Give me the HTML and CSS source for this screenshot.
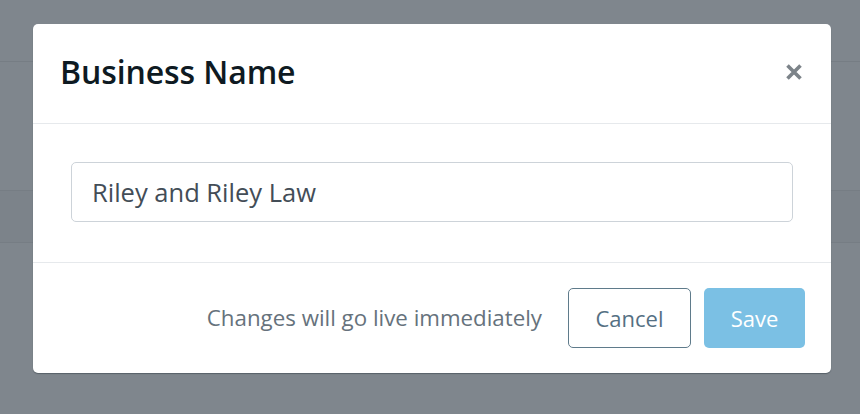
FILE: index.html
```html
<!DOCTYPE html>
<html>
<head>
<meta charset="utf-8">
<link rel="stylesheet" href="styles.css">
</head>
<body>
<div class="backdrop">
  <div class="bg-row bg-top"></div>
  <div class="bg-row bg-mid"></div>
  <div class="bg-row bg-band"></div>
  <div class="bg-row bg-rest"></div>
</div>
<div class="modal">
  <div class="modal-header">
    <h2 class="modal-title">Business Name</h2>
    <button class="close" aria-label="Close">
      <svg width="18" height="18" viewBox="0 0 18 18"><path d="M2.5 2.5 L15.5 15.5 M15.5 2.5 L2.5 15.5" stroke="#7c8389" stroke-width="3.6" stroke-linecap="butt"/></svg>
    </button>
  </div>
  <div class="modal-body">
    <div class="input">Riley and Riley Law</div>
  </div>
  <div class="modal-footer">
    <span class="hint">Changes will go live immediately</span>
    <button class="btn btn-cancel">Cancel</button>
    <button class="btn btn-save">Save</button>
  </div>
</div>
</body>
</html>
```

FILE: styles.css
```css
* { box-sizing: border-box; }
html, body { margin: 0; padding: 0; }
body {
  width: 860px;
  height: 414px;
  overflow: hidden;
  background: #7f868d;
  font-family: "Open Sans", "Noto Sans", sans-serif;
  position: relative;
}
.backdrop {
  display: flex;
  flex-direction: column;
  height: 414px;
}
.bg-row { border-bottom: 1px solid #767d84; }
.bg-top { height: 62px; }
.bg-mid { height: 129px; }
.bg-band { height: 52px; background: #7c838a; }
.bg-rest { flex: 1; border-bottom: none; }

.modal {
  position: absolute;
  left: 33px;
  top: 24px;
  width: 798px;
  height: 349px;
  background: #fff;
  border-radius: 5px;
  box-shadow: 0 1px 1px rgba(40, 50, 60, 0.45);
  display: flex;
  flex-direction: column;
}
.modal-header {
  height: 100px;
  border-bottom: 1px solid #e6e9ec;
  display: flex;
  align-items: center;
  justify-content: space-between;
  padding: 0 27px 4px 27px;
}
.modal-title {
  margin: 0;
  font-size: 32px;
  font-weight: 600;
  color: #0e1a22;
  letter-spacing: -0.1px;
}
.close {
  border: none;
  background: none;
  padding: 0;
  width: 18px;
  height: 18px;
  margin-right: 1px;
  margin-top: 1px;
}
.close svg { display: block; }
.modal-body {
  padding: 38px 38px 40px 38px;
  border-bottom: 1px solid #e6e9ec;
}
.input {
  height: 60px;
  border: 1px solid #cdd3d9;
  border-radius: 5px;
  padding: 0 20px;
  display: flex;
  align-items: center;
  font-size: 25.5px;
  color: #434d57;
}
.modal-footer {
  flex: 1;
  display: flex;
  align-items: center;
  justify-content: flex-end;
  padding: 0 26px 1px 26px;
}
.hint {
  font-size: 22.3px;
  color: #66727c;
  margin-right: 26px;
}
.btn {
  height: 60px;
  border-radius: 5px;
  font-family: inherit;
  font-size: 22px;
  padding: 0;
}
.btn-cancel {
  width: 123px;
  background: #fff;
  border: 1px solid #5f7b8b;
  color: #557083;
  margin-right: 13px;
}
.btn-save {
  width: 101px;
  background: #7bc0e4;
  border: none;
  color: #fff;
}
```
